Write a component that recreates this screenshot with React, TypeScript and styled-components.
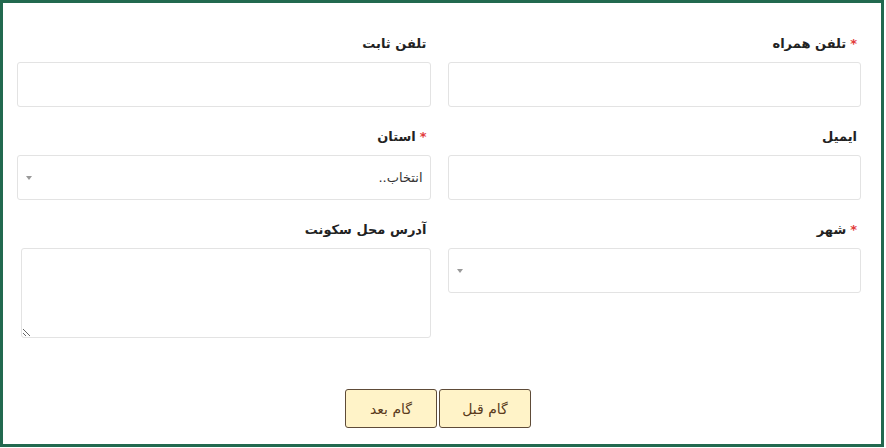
import React from 'react';
import styled, { createGlobalStyle } from 'styled-components';

const GlobalStyle = createGlobalStyle`
  html, body {
    margin: 0;
    padding: 0;
    background: #fff;
  }
  body {
    font-family: "DejaVu Sans", "Noto Sans", sans-serif;
    color: #333;
  }
`;

const Frame = styled.div`
  box-sizing: border-box;
  width: 884px;
  height: 447px;
  border: 3px solid #22694f;
  padding: 31px 20px 16px 14px;
  direction: rtl;
  display: flex;
  flex-direction: column;
`;

const FormGrid = styled.div`
  display: grid;
  grid-template-columns: 1fr 1fr;
  column-gap: 17px;
`;

const Field = styled.div`
  display: flex;
  flex-direction: column;
  margin-bottom: 20px;
`;

const Label = styled.label`
  font-size: 13px;
  font-weight: bold;
  line-height: 20px;
  height: 20px;
  color: #222;
  padding-right: 4px;
  margin-bottom: 8px;
  white-space: nowrap;
`;

const Star = styled.span`
  color: #e23b3b;
  margin-left: 4px;
  font-weight: bold;
`;

const TextInput = styled.input`
  box-sizing: border-box;
  height: 45px;
  width: 100%;
  border: 1px solid #e3e3e3;
  border-radius: 3px;
  background: #fff;
  outline: none;
  padding: 0 8px;
  font-family: inherit;
  font-size: 13px;
`;

const Select = styled.div`
  box-sizing: border-box;
  height: 45px;
  border: 1px solid #e3e3e3;
  border-radius: 3px;
  background: #fff;
  display: flex;
  align-items: center;
  justify-content: space-between;
  padding: 0 7px 0 8px;
  font-size: 13px;
  color: #333;
`;

const Arrow = styled.span`
  width: 0;
  height: 0;
  border-left: 3px solid transparent;
  border-right: 3px solid transparent;
  border-top: 4px solid #999;
  margin-right: auto;
`;

const TextArea = styled.textarea`
  box-sizing: border-box;
  height: 90px;
  width: calc(100% - 4px);
  margin-right: 0;
  margin-left: 4px;
  border: 1px solid #e3e3e3;
  border-radius: 3px;
  outline: none;
  font-family: inherit;
  font-size: 13px;
  resize: vertical;
  display: block;
`;

const Actions = styled.div`
  display: flex;
  justify-content: center;
  gap: 2px;
  margin-top: 31px;
  padding-right: 2px;
`;

const StepButton = styled.button`
  box-sizing: border-box;
  width: 92px;
  height: 39px;
  background: #fff3c8;
  border: 1px solid #5e4b38;
  border-radius: 3px;
  color: #5a3b1c;
  font-family: inherit;
  font-size: 14px;
  font-weight: normal;
  cursor: pointer;
`;

const App = () => {
  return (
    <>
      <GlobalStyle />
      <Frame>
        <FormGrid>
          <Field>
            <Label><Star>*</Star>تلفن همراه</Label>
            <TextInput type="text" />
          </Field>
          <Field>
            <Label>تلفن ثابت</Label>
            <TextInput type="text" />
          </Field>
          <Field>
            <Label>ایمیل</Label>
            <TextInput type="text" />
          </Field>
          <Field>
            <Label><Star>*</Star>استان</Label>
            <Select>
              <span>انتخاب..</span>
              <Arrow />
            </Select>
          </Field>
          <Field>
            <Label><Star>*</Star>شهر</Label>
            <Select>
              <span></span>
              <Arrow />
            </Select>
          </Field>
          <Field>
            <Label>آدرس محل سکونت</Label>
            <TextArea />
          </Field>
        </FormGrid>
        <Actions>
          <StepButton>گام قبل</StepButton>
          <StepButton>گام بعد</StepButton>
        </Actions>
      </Frame>
    </>
  );
};

export default App;
